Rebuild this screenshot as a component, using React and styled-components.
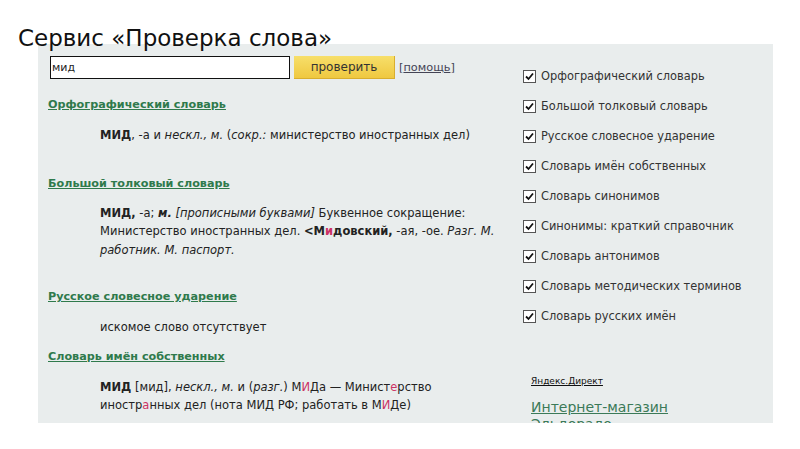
import styled, { createGlobalStyle } from "styled-components";

const GlobalStyle = createGlobalStyle`
  html, body {
    margin: 0;
    padding: 0;
    background: #fff;
  }
  body {
    width: 800px;
    height: 449px;
    overflow: hidden;
    font-family: "DejaVu Sans", Verdana, sans-serif;
  }
`;

const Page = styled.div`
  padding: 27px 0 0 18px;
`;

const Title = styled.h1`
  margin: 0 0 -5px;
  font-family: "DejaVu Sans", sans-serif;
  font-weight: normal;
  font-size: 23px;
  line-height: 22px;
  color: #111;
  position: relative;
  z-index: 1;
`;

const Panel = styled.div`
  margin: 0 0 0 20px;
  width: 735px;
  height: 379px;
  background: #e9eded;
  display: flex;
  overflow: hidden;
`;

const Main = styled.div`
  width: 470px;
  padding: 12px 0 0 10px;
`;

const SearchRow = styled.div`
  display: flex;
  align-items: center;
  padding-left: 2px;
  gap: 4px;
`;

const Input = styled.div`
  width: 237px;
  height: 21px;
  border: 1px solid #111;
  background: #fff;
  font-size: 11px;
  line-height: 21px;
  padding-left: 1px;
  color: #222;
`;

const Button = styled.div`
  width: 101px;
  height: 23px;
  background: linear-gradient(#f7df6a, #efc840);
  border-right: 1px solid #d9ae2e;
  border-bottom: 1px solid #d9ae2e;
  box-sizing: border-box;
  text-align: center;
  font-size: 12px;
  line-height: 23px;
  color: #333;
`;

const Help = styled.span`
  font-size: 11.3px;
  color: #445;
  span {
    text-decoration: underline;
  }
`;

const Heading = styled.div`
  font-size: 11.2px;
  font-weight: bold;
  color: #2f7a4c;
  text-decoration: underline;
  line-height: 14px;
  margin-top: ${(p) => p.$top}px;
`;

const Definition = styled.div`
  margin: ${(p) => p.$top}px 0 0 52px;
  font-size: 11.5px;
  line-height: 18.5px;
  color: #222;
  white-space: nowrap;
  b {
    font-weight: bold;
  }
  i {
    font-style: italic;
  }
`;

const Stress = styled.span`
  color: #cc3366;
`;

const Side = styled.div`
  flex: 1;
  padding: 25px 0 0 5px;
`;

const CheckList = styled.div`
  display: flex;
  flex-direction: column;
  gap: 16px;
`;

const CheckRow = styled.div`
  display: flex;
  align-items: center;
  gap: 5px;
  height: 14px;
  font-size: 11.4px;
  color: #333;
`;

const Box = styled.span`
  width: 11px;
  height: 11px;
  border: 1px solid #555;
  background: #fff;
  display: flex;
  align-items: center;
  justify-content: center;
`;

const Direct = styled.div`
  margin: 53px 0 0 8px;
  font-size: 9px;
  color: #111;
  text-decoration: underline;
`;

const Ad = styled.div`
  margin: 13px 0 0 8px;
  font-size: 14px;
  line-height: 17px;
  color: #3b7a58;
  text-decoration: underline;
`;

const Check = () => (
  <Box>
    <svg width="9" height="9" viewBox="0 0 9 9">
      <path d="M1 4.5 L3.5 7 L8 1.5" fill="none" stroke="#111" strokeWidth="1.8" />
    </svg>
  </Box>
);

const dictionaries = [
  "Орфографический словарь",
  "Большой толковый словарь",
  "Русское словесное ударение",
  "Словарь имён собственных",
  "Словарь синонимов",
  "Синонимы: краткий справочник",
  "Словарь антонимов",
  "Словарь методических терминов",
  "Словарь русских имён",
];

export default function App() {
  return (
    <>
      <GlobalStyle />
      <Page>
        <Title>Сервис «Проверка слова»</Title>
        <Panel>
          <Main>
            <SearchRow>
              <Input>мид</Input>
              <Button>проверить</Button>
              <Help>
                [<span>помощь</span>]
              </Help>
            </SearchRow>

            <Heading $top={19}>Орфографический словарь</Heading>
            <Definition $top={14}>
              <b>МИД</b>, -а и <i>нескл., м.</i> (<i>сокр.:</i> министерство иностранных дел)
            </Definition>

            <Heading $top={32}>Большой толковый словарь</Heading>
            <Definition $top={13}>
              <b>МИД,</b> -а; <b><i>м.</i></b> <i>[прописными буквами]</i> Буквенное сокращение:
              <br />
              Министерство иностранных дел. <b>&lt;М<Stress>и</Stress>довский,</b> -ая, -ое.{" "}
              <i>Разг. М.</i>
              <br />
              <i>работник. М. паспорт.</i>
            </Definition>

            <Heading $top={31}>Русское словесное ударение</Heading>
            <Definition $top={14}>искомое слово отсутствует</Definition>

            <Heading $top={13}>Словарь имён собственных</Heading>
            <Definition $top={14}>
              <b>МИД</b> [мид], <i>нескл., м.</i> и (<i>разг.</i>) М<Stress>И</Stress>Да — Минист
              <Stress>е</Stress>рство
              <br />
              иностр<Stress>а</Stress>нных дел (нота МИД РФ; работать в М<Stress>И</Stress>Де)
            </Definition>
          </Main>

          <Side>
            <CheckList>
              {dictionaries.map((d) => (
                <CheckRow key={d}>
                  <Check />
                  {d}
                </CheckRow>
              ))}
            </CheckList>
            <Direct>Яндекс.Директ</Direct>
            <Ad>
              Интернет-магазин
              <br />
              Эльдорадо
            </Ad>
          </Side>
        </Panel>
      </Page>
    </>
  );
}
